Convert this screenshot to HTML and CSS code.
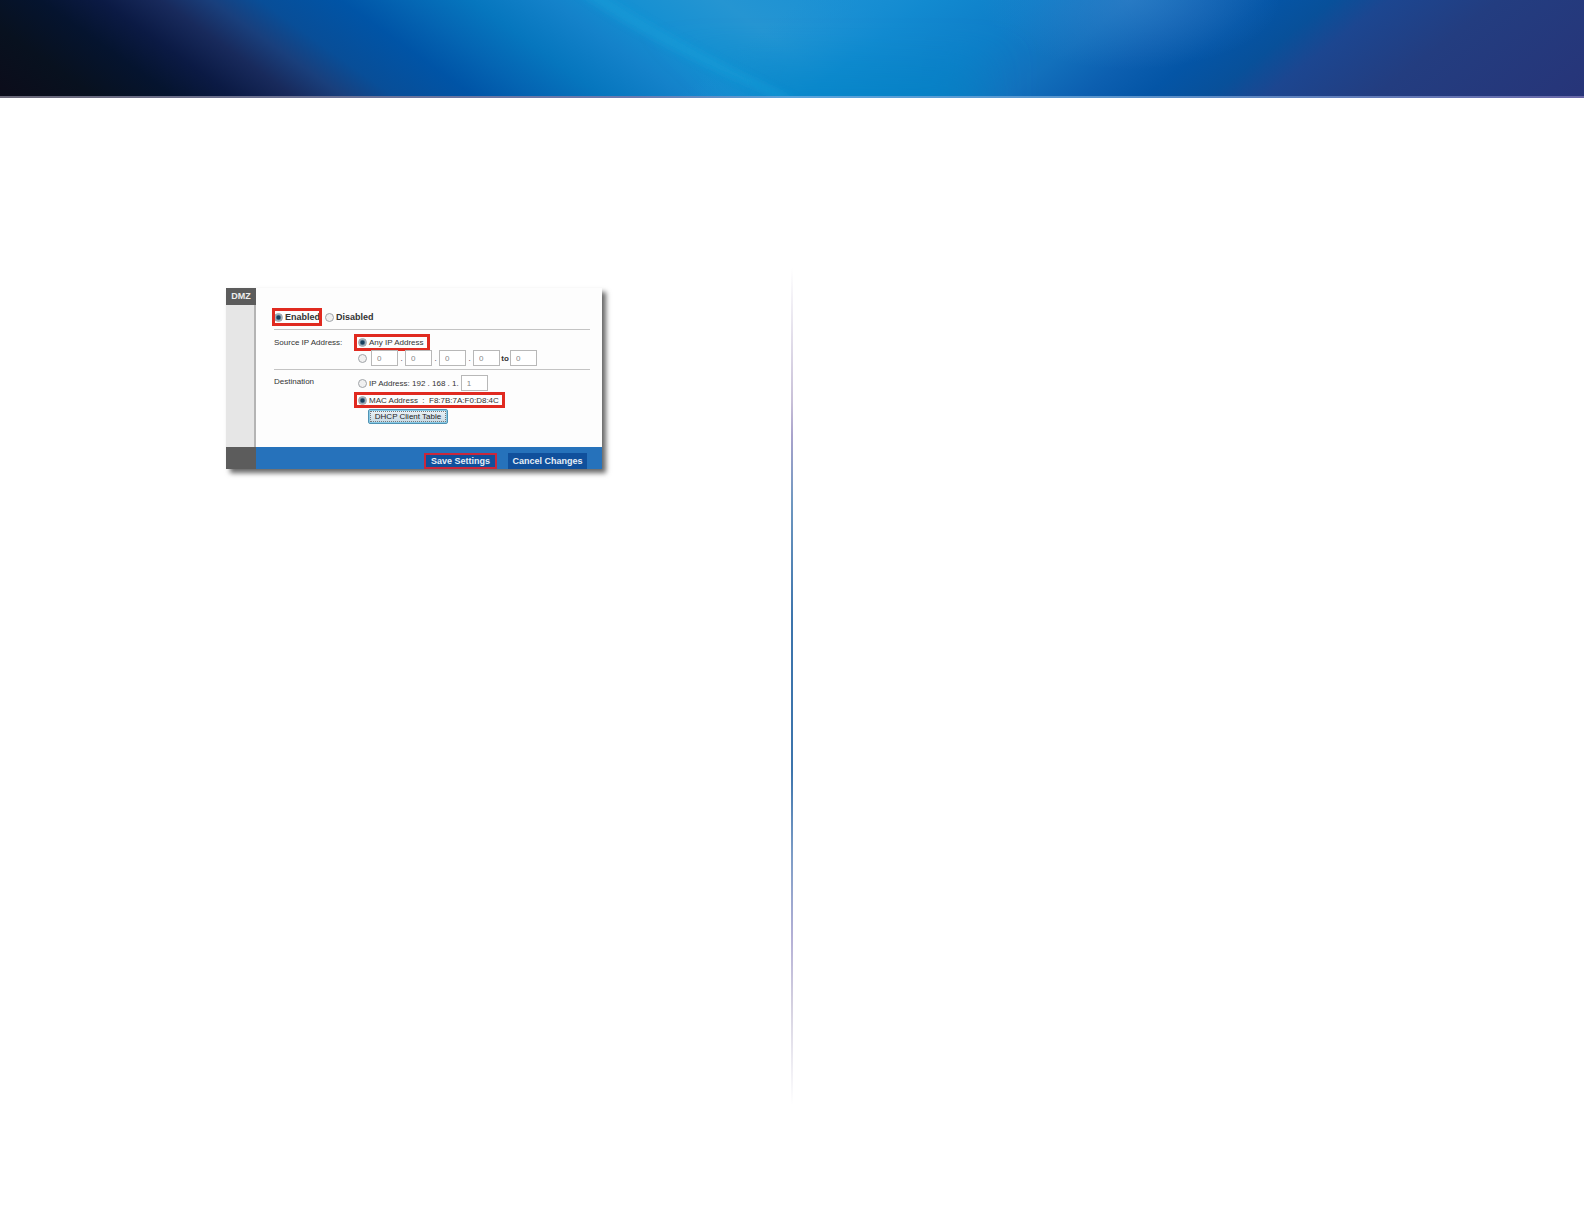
FILE: index.html
```html
<!DOCTYPE html>
<html lang="en">
<head>
  <meta charset="UTF-8" />
  <meta name="viewport" content="width=device-width, initial-scale=1.0" />
  <title>DMZ</title>
  <link rel="stylesheet" href="styles.css">
</head>
<body>
  <header class="banner">
    <svg class="banner-art" viewBox="0 0 1584 97" preserveAspectRatio="none" aria-hidden="true">
      <defs>
        <linearGradient id="left" gradientUnits="userSpaceOnUse" x1="-140" y1="0" x2="860" y2="0" gradientTransform="skewX(54)">
          <stop offset="0" stop-color="#0c0c1a" />
          <stop offset=".1" stop-color="#08111f" />
          <stop offset=".18" stop-color="#05142f" />
          <stop offset=".24" stop-color="#0b1a44" />
          <stop offset=".3" stop-color="#182a5c" />
          <stop offset=".35" stop-color="#193f7c" />
          <stop offset=".4" stop-color="#084e98" />
          <stop offset=".48" stop-color="#0054a6" />
          <stop offset=".54" stop-color="#0464b2" />
          <stop offset=".61" stop-color="#0676be" />
          <stop offset=".69" stop-color="#1482ca" />
          <stop offset=".76" stop-color="#1590d2" />
          <stop offset=".86" stop-color="#2595d2" />
          <stop offset="1" stop-color="#1a90d4" />
        </linearGradient>
        <linearGradient id="right" gradientUnits="userSpaceOnUse" x1="800" y1="0" x2="1720" y2="0" gradientTransform="skewX(-52)">
          <stop offset="0" stop-color="#1a90d4" stop-opacity="0" />
          <stop offset=".14" stop-color="#128ad0" />
          <stop offset=".26" stop-color="#0e7ec8" />
          <stop offset=".36" stop-color="#1270bc" />
          <stop offset=".44" stop-color="#0c5fb0" />
          <stop offset=".51" stop-color="#0455a6" />
          <stop offset=".58" stop-color="#08509a" />
          <stop offset=".64" stop-color="#1c4690" />
          <stop offset=".76" stop-color="#233d80" />
          <stop offset="1" stop-color="#273478" />
        </linearGradient>
        <linearGradient id="deep" x1="0" y1="0" x2="0" y2="1">
          <stop offset=".3" stop-color="#0088c8" stop-opacity="0" />
          <stop offset="1" stop-color="#0084c4" stop-opacity=".7" />
        </linearGradient>
        <radialGradient id="glow">
          <stop offset="0" stop-color="#3d84cc" stop-opacity=".5" />
          <stop offset="1" stop-color="#3d84cc" stop-opacity="0" />
        </radialGradient>
        <filter id="soft" x="-20%" y="-50%" width="140%" height="200%">
          <feGaussianBlur stdDeviation="4" />
        </filter>
        <filter id="wide" x="-20%" y="-50%" width="140%" height="200%">
          <feGaussianBlur stdDeviation="24 8" />
        </filter>
      </defs>
      <rect width="1584" height="97" fill="url(#left)" />
      <rect width="1584" height="97" fill="url(#right)" />
      <path d="M620 -10H1000L980 120H780Z" fill="url(#deep)" filter="url(#wide)" />
      <ellipse cx="1130" cy="0" rx="150" ry="70" fill="url(#glow)" />
      <path d="M575 -10Q640 40 780 100H795Q670 40 597 -10Z" fill="#14a0da" opacity=".5" filter="url(#soft)" />
    </svg>
  </header>

  <main class="page">
    <section class="column">
      <form class="panel">
        <h2 class="panel-title">DMZ</h2>
        <div class="panel-side"></div>

        <div class="panel-body">
          <div class="row row-status">
            <label class="option marked"><input type="radio" name="dmz" checked>Enabled</label>
            <label class="option"><input type="radio" name="dmz">Disabled</label>
          </div>

          <div class="row row-grid" role="group" aria-labelledby="source">
            <span class="caption" id="source">Source IP Address:</span>
            <div class="options">
              <label class="option padded marked"><input type="radio" name="source" checked>Any IP Address</label>
              <div class="option padded ip-range">
                <input type="radio" name="source" aria-label="IP range">
                <input type="text" value="0" aria-label="Octet 1"><span class="dot">.</span>
                <input type="text" value="0" aria-label="Octet 2"><span class="dot">.</span>
                <input type="text" value="0" aria-label="Octet 3"><span class="dot">.</span>
                <input type="text" value="0" aria-label="Octet 4"><span class="to">to</span>
                <input type="text" value="0" aria-label="Range end">
              </div>
            </div>
          </div>

          <div class="row row-grid" role="group" aria-labelledby="destination">
            <span class="caption" id="destination">Destination</span>
            <div class="options options-dest">
              <div class="option padded ip-address">
                <input type="radio" name="dest" id="dest-ip">
                <label for="dest-ip">IP Address: 192 . 168 . 1.</label>
                <input type="text" value="1" aria-label="Host number">
              </div>
              <label class="option padded marked mac"><input type="radio" name="dest" checked><span>MAC Address&nbsp; : &nbsp;F8:7B:7A:F0:D8:4C</span></label>
              <button type="button" class="btn-table">DHCP Client Table</button>
            </div>
          </div>
        </div>

        <div class="panel-corner"></div>
        <div class="panel-actions">
          <button type="submit" class="btn btn-save">Save Settings</button>
          <button type="reset" class="btn">Cancel Changes</button>
        </div>
      </form>
    </section>
    <div class="divider"></div>
    <section class="column"></section>
  </main>
</body>
</html>
```
FILE: styles.css
```css
:root {
  --red: #e02a20;
  --blue: #2672bb;
  --blue-dark: #10509c;
  --gray: #5c5c5c;
  --line: #c4c4c4;
  --text: #333;
}
* {
  box-sizing: border-box;
}
body {
  display: flex;
  flex-direction: column;
  min-height: 100vh;
  margin: 0;
  background: #fff;
  color: var(--text);
  font-family: "Liberation Sans", Arial, sans-serif;
  font-size: 8px;
}
.banner {
  height: 98px;
  background: linear-gradient(90deg, #6a6878, #6a7ab0 40%, #5aa4dc 50%, #5a94cc 70%, #6a68a8);
}
.banner-art {
  display: block;
  width: 100%;
  height: 96px;
}
.page {
  flex: 1;
  display: grid;
  grid-template-columns: 1fr 2px 1fr;
  padding: 170px 0 119px;
}
.column {
  padding: 20px 0 0 226px;
}
.divider {
  background: linear-gradient(#fff, #c8c0d8 16%, #a9a3cc 20%, #6f97c0 28%, #3c74ac 42%, #3c74ac 60%, #7c9cc6 70%, #b4b0d6 80%, #d4d0e0 88%, #fff);
}

/* settings panel */
.panel {
  display: grid;
  grid-template-columns: 30px 1fr;
  grid-template-rows: 17px auto 22px;
  max-width: 376px;
  background: #fdfdfd;
  box-shadow: 4px 4px 5px rgba(0, 0, 0, 0.6);
}
.panel-title {
  margin: 0;
  background: var(--gray);
  color: #eee;
  font-size: 9px;
  line-height: 17px;
  text-align: center;
}
.panel-side {
  grid-column: 1;
  background: #e6e6e6;
  border-right: 2px solid #b4b4b4;
}
.panel-body {
  grid-column: 2;
  grid-row: 1 / 3;
  padding: 0 12px 0 18px;
}
.panel-corner {
  background: var(--gray);
}
.row {
  border-bottom: 1px solid var(--line);
}
.row:last-child {
  border-bottom: none;
}
.row-status {
  display: flex;
  gap: 5px;
  padding: 22px 0 5px;
  font-size: 9px;
  font-weight: bold;
}
.row-status .option {
  height: 14px;
}
.row-grid {
  display: grid;
  grid-template-columns: 82px 1fr;
  padding: 6px 0 3px;
}
.row-grid:last-child {
  padding: 5px 0 23px;
}
.caption {
  line-height: 13px;
}
.options-dest {
  gap: 3px;
}
.options {
  display: flex;
  flex-direction: column;
  align-items: flex-start;
  gap: 1px;
}
.options.options-dest {
  gap: 3px;
}
.option {
  display: flex;
  align-items: center;
  gap: 2px;
  height: 13px;
  white-space: nowrap;
}
.padded {
  padding: 0 4px 0 2px;
}
.marked {
  outline: 3px solid var(--red);
  outline-offset: -1px;
}
.option.mac {
  width: 147px;
  height: 12px;
}
.option.ip-range,
.option.ip-address {
  height: 16px;
}
.ip-range {
  gap: 0;
}
.ip-range input[type="radio"] {
  margin-right: 4px;
}
.dot {
  width: 7px;
  text-align: center;
}
.to {
  width: 10px;
  text-align: center;
  font-weight: bold;
}
input[type="radio"] {
  appearance: none;
  flex: none;
  width: 9px;
  height: 9px;
  margin: 0;
  border: 1px solid #a0a4a8;
  border-radius: 50%;
  background: #f0f0f0;
}
input[type="radio"]:checked {
  background: radial-gradient(circle, #17405e 30%, #a9bac6 65%);
}
input[type="text"] {
  width: 27px;
  height: 16px;
  padding: 0 5px;
  border: 1px solid #b8b8b8;
  background: #fff;
  color: #888;
  font: inherit;
}
.btn-table {
  width: 80px;
  height: 15px;
  margin-left: 12px;
  padding: 0;
  border: 1px solid #4f93b4;
  border-radius: 2px;
  outline: 1px dotted #777;
  outline-offset: -3px;
  background: linear-gradient(#eef4f8, #c4d8e4);
  box-shadow: inset 0 0 0 1px #8ccbe6;
  color: #222;
  font: inherit;
}
.panel-actions {
  display: flex;
  justify-content: flex-end;
  align-items: flex-end;
  gap: 11px;
  padding-right: 15px;
  background: var(--blue);
}
.btn {
  width: 79px;
  height: 16px;
  padding: 0;
  border: none;
  background: var(--blue-dark);
  color: #e4eef8;
  font: inherit;
  font-size: 9px;
  line-height: 12px;
  font-weight: bold;
}
.btn-save {
  width: 73px;
  border: 2px solid #c8283c;
}
```
